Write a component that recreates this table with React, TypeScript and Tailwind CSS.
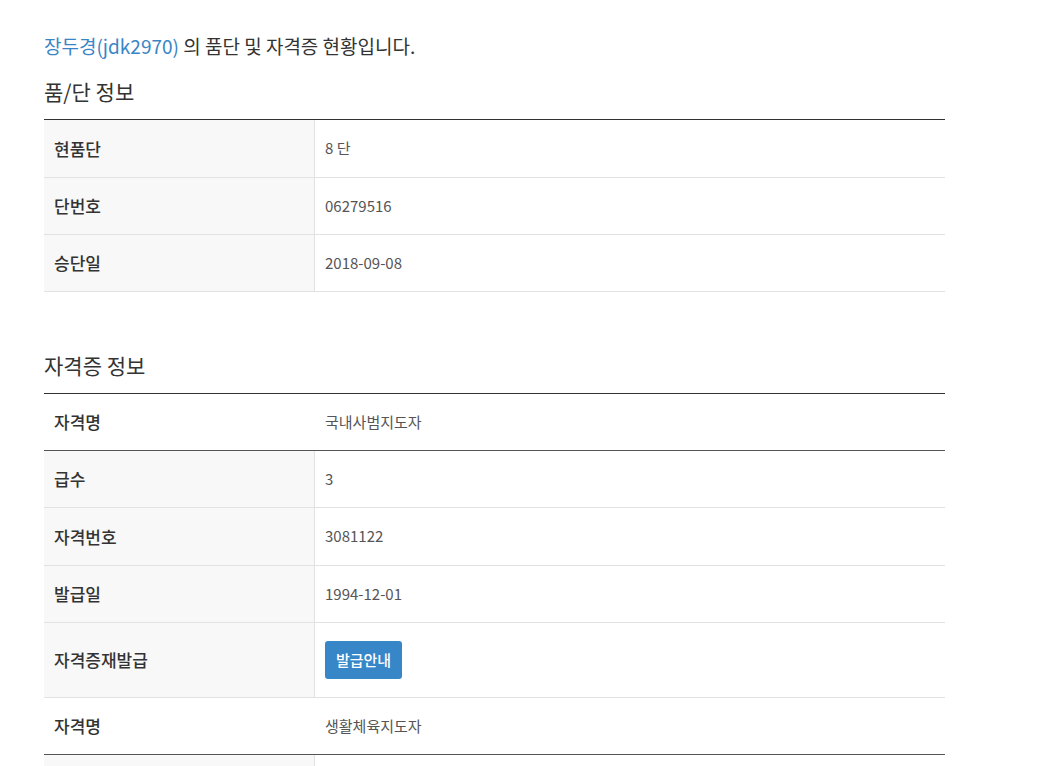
const font = { fontFamily: '"Noto Sans CJK KR", "Noto Sans", sans-serif' };

type Row = { label: string; value?: string; button?: string; head?: boolean; tall?: boolean };

const rankRows: Row[] = [
  { label: "현품단", value: "8 단", tall: true },
  { label: "단번호", value: "06279516" },
  { label: "승단일", value: "2018-09-08" },
];

const licenseRows: Row[] = [
  { label: "자격명", value: "국내사범지도자", head: true },
  { label: "급수", value: "3" },
  { label: "자격번호", value: "3081122", tall: true },
  { label: "발급일", value: "1994-12-01" },
  { label: "자격증재발급", button: "발급안내" },
  { label: "자격명", value: "생활체육지도자", head: true },
  { label: "급수", value: "" },
];

function InfoTable({ rows }: { rows: Row[] }) {
  return (
    <div className="border-t border-[#333]">
      {rows.map((row, i) =>
        row.head ? (
          <div key={i} className="flex h-[57px] border-b border-[#555] bg-white">
            <div className="w-[271px] flex items-center pl-[10px] text-[17px] font-medium text-[#333]">
              {row.label}
            </div>
            <div className="flex-1 flex items-center pl-[10px] text-[15px] text-[#555]">{row.value}</div>
          </div>
        ) : (
          <div
            key={i}
            className={`flex border-b border-[#e2e2e2] ${row.button ? "h-[75px]" : row.tall ? "h-[58px]" : "h-[57px]"}`}
          >
            <div className="w-[271px] flex items-center pl-[10px] bg-[#f8f8f8] border-r border-[#e2e2e2] text-[17px] font-medium text-[#333]">
              {row.label}
            </div>
            <div className="flex-1 flex items-center pl-[10px] text-[15px] text-[#555]">
              {row.button ? (
                <button className="h-[38px] w-[77px] rounded-[3px] bg-[#3686c8] text-white text-[15px] font-medium">
                  {row.button}
                </button>
              ) : (
                row.value
              )}
            </div>
          </div>
        )
      )}
    </div>
  );
}

export default function App() {
  return (
    <div className="min-h-screen bg-white pl-[44px] pt-[33px]" style={font}>
      <div className="w-[901px]">
        <p className="text-[19px] leading-[26px] text-[#333]">
          <span className="text-[#3a85c5]">장두경(jdk2970)</span> 의 품단 및 자격증 현황입니다.
        </p>
        <h3 className="mt-[18px] mb-[14px] text-[21px] leading-[28px] text-[#333]">품/단 정보</h3>
        <InfoTable rows={rankRows} />

        <h3 className="mt-[59px] mb-[14px] text-[21px] leading-[28px] text-[#333]">자격증 정보</h3>
        <InfoTable rows={licenseRows} />
      </div>
    </div>
  );
}
